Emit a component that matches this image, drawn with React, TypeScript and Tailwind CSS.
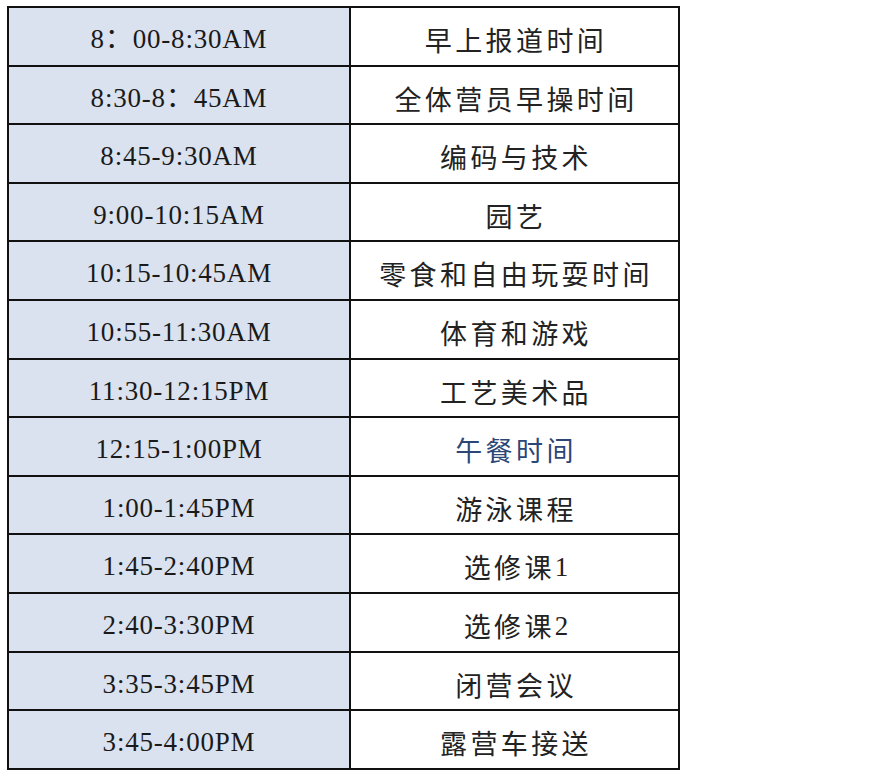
import React from "react";

const rows: [string, string, boolean?][] = [
  ["8：00-8:30AM", "早上报道时间"],
  ["8:30-8：45AM", "全体营员早操时间"],
  ["8:45-9:30AM", "编码与技术"],
  ["9:00-10:15AM", "园艺"],
  ["10:15-10:45AM", "零食和自由玩耍时间"],
  ["10:55-11:30AM", "体育和游戏"],
  ["11:30-12:15PM", "工艺美术品"],
  ["12:15-1:00PM", "午餐时间", true],
  ["1:00-1:45PM", "游泳课程"],
  ["1:45-2:40PM", "选修课1"],
  ["2:40-3:30PM", "选修课2"],
  ["3:35-3:45PM", "闭营会议"],
  ["3:45-4:00PM", "露营车接送"],
];

function Activity({ text }: { text: string }) {
  const m = text.match(/^(.*?)(\d+)$/);
  if (!m) return <>{text}</>;
  return (
    <>
      {m[1]}
      <span
        className="tracking-normal"
        style={{ fontFamily: '"Liberation Serif", serif' }}
      >
        {m[2]}
      </span>
    </>
  );
}

export default function App() {
  return (
    <div className="w-[880px] h-[776px] bg-white pt-[6px] pl-[7px]">
      <div className="w-[673px] border-2 border-[#111]">
        {rows.map(([t, a, blue], i) => (
          <div
            key={i}
            className={
              "grid grid-cols-[342px_1fr] " +
              (i > 0 ? "h-[58.6px] border-t-2 border-[#111]" : "h-[56.6px]")
            }
          >
            <div
              className="bg-[#dae2ef] border-r-2 border-[#111] flex items-center justify-center pt-[6px] text-[27px] tracking-[0.8px] text-[#1a1a1a]"
              style={{ fontFamily: '"Liberation Serif", "Noto Sans CJK SC", serif' }}
            >
              {t}
            </div>
            <div
              className={
                "flex items-center justify-center pt-[8px] text-[27px] tracking-[3.4px] pl-[3px] " +
                (blue ? "text-[#2c4676]" : "text-[#222]")
              }
              style={{ fontFamily: '"Noto Sans CJK SC", "Liberation Serif", sans-serif' }}
            >
              <Activity text={a} />
            </div>
          </div>
        ))}
      </div>
    </div>
  );
}
